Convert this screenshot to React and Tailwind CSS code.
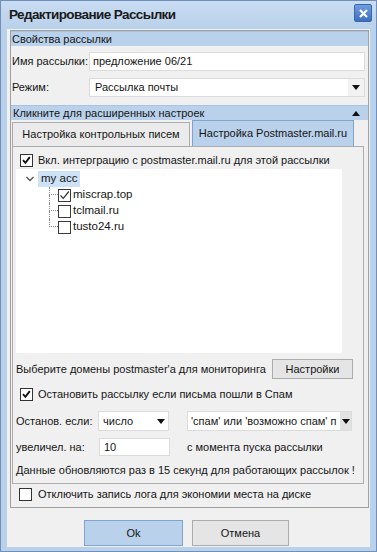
import React from "react";

function Check({ checked, tree }) {
  return (
    <span
      className={`inline-flex w-[13px] h-[13px] border ${tree ? "border-[#3a3a3a]" : "border-[#333]"} bg-white items-center justify-center shrink-0`}
    >
      {checked && (
        <svg width="11" height="11" viewBox="0 0 11 11">
          {tree ? (
            <path d="M1.5 5.5 L4.3 8.3 L9.8 1.5" stroke="#333" strokeWidth="1.2" fill="none" />
          ) : (
            <path d="M2 5.2 L4.4 7.8 L8.8 2.2" stroke="#111" strokeWidth="1.9" fill="none" />
          )}
        </svg>
      )}
    </span>
  );
}

function Arrow({ up }) {
  return (
    <svg width="8" height="5" viewBox="0 0 8 5">
      {up ? <path d="M0 5 L4 0 L8 5 Z" fill="#111" /> : <path d="M0 0 L8 0 L4 5 Z" fill="#111" />}
    </svg>
  );
}

function TreeItem({ label, checked, last }) {
  return (
    <div className="flex h-[16px] items-stretch">
      <span className="w-[9px] flex flex-col shrink-0">
        <span className="h-[8px] border-l border-b border-dotted border-[#8a8a8a]" />
        <span className={`flex-1 ${last ? "" : "border-l border-dotted border-[#8a8a8a]"}`} />
      </span>
      <span className="flex items-center">
        <Check checked={checked} tree />
      </span>
      <span className="flex items-center ml-[2px] text-[11.5px] whitespace-nowrap">{label}</span>
    </div>
  );
}

export default function App() {
  return (
    <div className="w-[377px] h-[552px] bg-[#b9d1ea] border border-[#6f90bb] flex flex-col font-['Liberation_Sans',Arial,sans-serif] text-[11px] text-[#151515] leading-none whitespace-nowrap">
      {/* Title bar */}
      <div className="h-[28px] shrink-0 flex items-center justify-between pl-[8px] pr-[4px] bg-gradient-to-b from-[#c9dcf2] to-[#b9d1ea]">
        <span className="text-[13.5px] font-bold tracking-[-0.6px] text-[#1a1a1a] -mt-[1px]">Редактирование Рассылки</span>
        <div className="w-[18px] h-[18px] -mt-[4px] rounded-[2px] border border-[#3b67a8] bg-gradient-to-b from-[#6f9de0] to-[#3d6fc2] flex items-center justify-center">
          <svg width="9" height="9" viewBox="0 0 9 9">
            <path d="M1 1 L8 8 M8 1 L1 8" stroke="#fff" strokeWidth="2.2" />
          </svg>
        </div>
      </div>

      {/* Content */}
      <div className="flex-1 mx-[6px] mb-[4px] bg-[#f0f0f0] flex flex-col">
        <div className="ml-[3px] mt-[1px] w-[359px] h-[478px] border border-[#a0a0a0] flex flex-col">
          {/* Header 1 */}
          <div className="h-[15px] bg-[#b9d1ea] border-t border-[#a9c3e2] flex items-center pl-[1px]">
            Свойства рассылки
          </div>
          {/* Name row */}
          <div className="mt-[6px] h-[19px] flex items-center pl-[1px] pr-[3px]">
            <span className="w-[77px]">Имя рассылки:</span>
            <div className="flex-1 h-full bg-white border border-[#dcdcdc] flex items-center pl-[3px]">
              предложение 06/21
            </div>
          </div>
          {/* Mode row */}
          <div className="mt-[7px] h-[19px] flex items-center pl-[1px] pr-[3px]">
            <span className="w-[77px]">Режим:</span>
            <div className="flex-1 h-full bg-white border border-[#dcdcdc] flex items-center pl-[5px]">
              <span className="flex-1">Рассылка почты</span>
              <span className="w-[16px] h-full bg-[#f2f2f2] flex items-center justify-center">
                <Arrow />
              </span>
            </div>
          </div>
          {/* Header 2 */}
          <div className="mt-[8px] h-[15px] bg-[#b9d1ea] border-t border-[#a9c3e2] flex items-center pl-[2px] pr-[8px]">
            <span className="flex-1">Кликните для расширенных настроек</span>
            <Arrow up />
          </div>
          {/* Tabs */}
          <div className="h-[26px] flex items-end pl-[1px] gap-[2px]">
            <div className="w-[178px] h-[24px] bg-[#ebebeb] border border-b-0 border-[#acacac] flex items-center justify-center">
              Настройка контрольных писем
            </div>
            <div className="w-[162px] h-[26px] bg-[#b9d1ea] border border-b-0 border-[#7fa4d0] flex items-center justify-center">
              Настройка Postmaster.mail.ru
            </div>
          </div>
          {/* Tab panel */}
          <div className="ml-[1px] w-[352px] h-[338px] border border-[#acacac] flex flex-col">
            <div className="mt-[7px] h-[13px] flex items-center pl-[7px]">
              <Check checked />
              <span className="ml-[5px]">Вкл. интерграцию с postmaster.mail.ru для этой рассылки</span>
            </div>
            {/* Tree */}
            <div className="mt-[2px] ml-[3px] w-[326px] h-[184px] bg-white pt-[2px] flex flex-col">
              <div className="h-[16px] flex items-center pl-[10px]">
                <svg width="8" height="6" viewBox="0 0 8 6">
                  <path d="M0.5 1 L4 4.5 L7.5 1" stroke="#555" strokeWidth="1.3" fill="none" />
                </svg>
                <span className="ml-[4px] h-full px-[3px] bg-[#cde2f6] flex items-center text-[11.5px]">my acc</span>
              </div>
              <div className="ml-[33px] flex flex-col">
                <TreeItem label="miscrap.top" checked />
                <TreeItem label="tclmail.ru" />
                <TreeItem label="tusto24.ru" last />
              </div>
            </div>
            {/* Choose domains row */}
            <div className="mt-[6px] h-[20px] flex items-center pl-[3px] pr-[10px]">
              <span className="flex-1">Выберите домены postmaster'a для мониторинга</span>
              <div className="w-[81px] h-full bg-[#e5e5e5] border border-[#acacac] flex items-center justify-center">
                Настройки
              </div>
            </div>
            {/* Stop checkbox */}
            <div className="mt-[9px] h-[13px] flex items-center pl-[7px]">
              <Check checked />
              <span className="ml-[5px]">Остановить рассылку если письма пошли в Спам</span>
            </div>
            {/* Stop if row */}
            <div className="mt-[10px] h-[20px] flex items-center pl-[3px]">
              <span className="w-[82px]">Останов. если:</span>
              <div className="w-[71px] h-full bg-white border border-[#dcdcdc] flex items-center pl-[4px]">
                <span className="flex-1">число</span>
                <span className="w-[14px] flex items-center justify-center">
                  <Arrow />
                </span>
              </div>
              <div className="ml-[18px] w-[165px] h-full bg-white border border-[#dcdcdc] flex items-center pl-[3px] overflow-hidden">
                <span className="flex-1 overflow-hidden">'спам' или 'возможно спам' п</span>
                <span className="w-[11px] h-full bg-[#e2e2e2] flex items-center justify-center shrink-0">
                  <Arrow />
                </span>
              </div>
            </div>
            {/* Increase row */}
            <div className="mt-[7px] h-[18px] flex items-center pl-[3px]">
              <span className="w-[83px]">увеличел. на:</span>
              <div className="w-[71px] h-full bg-white border border-[#dcdcdc] flex items-center pl-[4px]">10</div>
              <span className="ml-[17px]">с момента пуска рассылки</span>
            </div>
            {/* Data text */}
            <div className="mt-[7px] h-[14px] flex items-center pl-[3px]">
              Данные обновляются раз в 15 секунд для работающих рассылок !
            </div>
          </div>
          {/* Log checkbox */}
          <div className="mt-[4px] h-[13px] flex items-center pl-[8px]">
            <Check />
            <span className="ml-[6px]">Отключить запись лога для экономии места на диске</span>
          </div>
        </div>
        {/* Buttons */}
        <div className="mt-[12px] flex pl-[77px] gap-[9px]">
          <div className="w-[99px] h-[26px] bg-[#b9d1ea] border border-[#7fa4d0] flex items-center justify-center">
            Ok
          </div>
          <div className="w-[97px] h-[26px] bg-[#e5e5e5] border border-[#acacac] flex items-center justify-center">
            Отмена
          </div>
        </div>
      </div>
    </div>
  );
}
